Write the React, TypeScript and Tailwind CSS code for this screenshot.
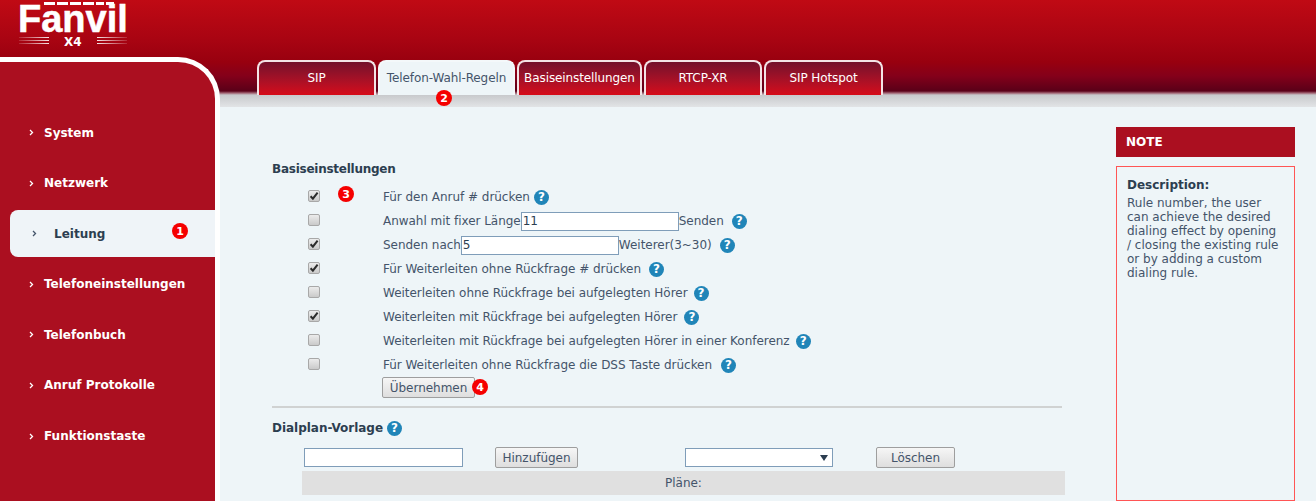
const menuItems = [
  "System",
  "Netzwerk",
  "Leitung",
  "Telefoneinstellungen",
  "Telefonbuch",
  "Anruf Protokolle",
  "Funktionstaste",
];

const tabs = [
  { label: "SIP", width: "w-[119px]" },
  { label: "Telefon-Wahl-Regeln", width: "w-[137px]", active: true },
  { label: "Basiseinstellungen", width: "w-[125px]" },
  { label: "RTCP-XR", width: "w-[118px]" },
  { label: "SIP Hotspot", width: "w-[119px]" },
];

function Badge({ n, className }: { n: number; className: string }) {
  return (
    <span
      className={`absolute flex h-4 w-4 items-center justify-center rounded-full bg-[#f50000] text-[11px] leading-none font-bold text-white ${className}`}
    >
      {n}
    </span>
  );
}

function Help({ className = "" }: { className?: string }) {
  return (
    <span
      className={`inline-flex h-[15px] w-[15px] shrink-0 items-center justify-center rounded-full bg-[#2085b8] text-[12px] leading-none font-bold text-white ${className}`}
    >
      ?
    </span>
  );
}

function Chevron({ className }: { className: string }) {
  return (
    <svg width="5" height="7" viewBox="0 0 5 7" className={className}>
      <path d="M1 1l2.5 2.5L1 6" fill="none" stroke="currentColor" strokeWidth="1.3" />
    </svg>
  );
}

function Check({ on }: { on?: boolean }) {
  return (
    <span className="-mt-[2px] flex h-3 w-3 items-center justify-center rounded-[2px] border border-[#a8a8a8] bg-gradient-to-b from-[#ececec] to-[#cacaca]">
      {on && (
        <svg width="10" height="10" viewBox="0 0 10 10">
          <path d="M1.6 5.2l2.3 2.5L8.6 1.6" fill="none" stroke="#2b2b2b" strokeWidth="2" />
        </svg>
      )}
    </span>
  );
}

function Button({ label, className }: { label: string; className: string }) {
  return (
    <button className={`h-[21px] rounded-[2px] border border-[#9e9e9e] bg-gradient-to-b from-[#f6f6f6] to-[#dedede] text-[12px] text-[#44546a] ${className}`}>
      {label}
    </button>
  );
}

function Row({ on, children }: { on?: boolean; children: React.ReactNode }) {
  return (
    <div className="flex h-6 items-center">
      <div className="ml-[36px] w-[75px]">
        <Check on={on} />
      </div>
      <div className="flex items-center whitespace-nowrap">{children}</div>
    </div>
  );
}

function Logo() {
  return (
    <div className="relative h-[57px] pt-[2px] pl-[18px]">
      <svg width="70" height="3" viewBox="0 0 70 3" className="absolute top-[2px] left-[44px]">
        <path d="M0 1.5h11M13 1.5h11M26 1.5h11M39 1.5h11M52 1.5h8M62 1.5h8" stroke="#fff" strokeWidth="3" />
      </svg>
      <div className="font-['Liberation_Sans'] text-[38px] leading-[34px] font-bold text-white [-webkit-text-stroke:0.5px_white]">Fanvil</div>
      <svg width="110" height="12" viewBox="0 0 110 12" className="block">
        <defs>
          <linearGradient id="fadeLeft">
            <stop offset="0" stopColor="#fff" stopOpacity="0.15" />
            <stop offset="1" stopColor="#fff" stopOpacity="0.9" />
          </linearGradient>
          <linearGradient id="fadeRight">
            <stop offset="0" stopColor="#fff" stopOpacity="0.9" />
            <stop offset="1" stopColor="#fff" stopOpacity="0.15" />
          </linearGradient>
        </defs>
        <rect x="1" y="1" width="30" height="1" fill="url(#fadeLeft)" />
        <rect x="1" y="4" width="30" height="1" fill="url(#fadeLeft)" />
        <rect x="1" y="7" width="30" height="1" fill="url(#fadeLeft)" />
        <rect x="79" y="1" width="30" height="1" fill="url(#fadeRight)" />
        <rect x="79" y="4" width="30" height="1" fill="url(#fadeRight)" />
        <rect x="79" y="7" width="30" height="1" fill="url(#fadeRight)" />
      </svg>
      <span className="absolute top-[33px] left-[64px] text-[12px] font-bold text-white">X4</span>
    </div>
  );
}

function Sidebar() {
  return (
    <div className="flex w-[220px] shrink-0 flex-col">
      <Logo />
      <nav className="flex flex-1 flex-col gap-[3.6px] rounded-tr-[42px] border-t-[5px] border-r-[5px] border-white bg-[#ab0f20] pt-[47px] text-[12px] font-bold text-white">
        {menuItems.map((item) =>
          item === "Leitung" ? (
            <div key={item} className="relative ml-[10px] flex h-[47px] items-center rounded-l-lg bg-[#eff4f8] text-[#2c3e50]">
              <Chevron className="ml-[22px] text-[#44546a]" />
              <span className="ml-[17px]">{item}</span>
              <Badge n={1} className="top-[13px] left-[162px]" />
            </div>
          ) : (
            <div key={item} className="flex h-[47px] items-center pl-[29px]">
              <Chevron className="text-white" />
              <span className="ml-[10px]">{item}</span>
            </div>
          ),
        )}
      </nav>
    </div>
  );
}

function Tabs() {
  return (
    <div className="relative flex h-[95px] items-end gap-[2px] pl-[37px]">
      {tabs.map((tab) => (
        <div
          key={tab.label}
          className={`flex h-[35px] items-center justify-center rounded-t-lg border-2 border-b-0 pb-[2px] text-[12px] tracking-[-0.1px] ${tab.width} ${
            tab.active
              ? "border-[#f4f8fa] bg-[#eef5f8] text-[#44546a]"
              : "border-[#f3e4e6] bg-gradient-to-b from-[#74102a] to-[#d60a18] text-white"
          }`}
        >
          {tab.label}
        </div>
      ))}
      <Badge n={2} className="top-[90px] left-[216px]" />
    </div>
  );
}

function Form() {
  return (
    <div className="relative w-[842px] pt-[54px] pl-[52px] text-[12px] tracking-[-0.03px] text-[#44546a]">
      <h3 className="text-[12px] leading-4 font-bold tracking-[-0.25px] text-[#2c3e50]">Basiseinstellungen</h3>
      <div className="mt-[8px]">
        <Row on>
          Für den Anruf # drücken
          <Help className="ml-[4px]" />
        </Row>
        <Row>
          Anwahl mit fixer Länge
          <input readOnly value="11" className="h-[19px] w-[158px] border border-[#7f9db9] bg-white px-[1px] text-[12px] text-[#2c3e50] outline-none" />
          Senden
          <Help className="ml-[8px]" />
        </Row>
        <Row on>
          Senden nach
          <input readOnly value="5" className="h-[19px] w-[158px] border border-[#7f9db9] bg-white px-[1px] text-[12px] text-[#2c3e50] outline-none" />
          Weiterer(3~30)
          <Help className="ml-[8px]" />
        </Row>
        <Row on>
          Für Weiterleiten ohne Rückfrage # drücken
          <Help className="ml-[8px]" />
        </Row>
        <Row>
          Weiterleiten ohne Rückfrage bei aufgelegten Hörer
          <Help className="ml-[6px]" />
        </Row>
        <Row on>
          Weiterleiten mit Rückfrage bei aufgelegten Hörer
          <Help className="ml-[7px]" />
        </Row>
        <Row>
          Weiterleiten mit Rückfrage bei aufgelegten Hörer in einer Konferenz
          <Help className="ml-[6px]" />
        </Row>
        <Row>
          Für Weiterleiten ohne Rückfrage die DSS Taste drücken
          <Help className="ml-[9px]" />
        </Row>
      </div>
      <div className="relative ml-[110px]">
        <Button label="Übernehmen" className="w-[93px]" />
        <Badge n={4} className="top-[2px] left-[90px]" />
      </div>
      <div className="mt-[8px] h-[2px] w-[790px] bg-[#d0d2d2]" />
      <div className="mt-[12px] flex h-4 items-center text-[12px] font-bold text-[#2c3e50]">
        Dialplan-Vorlage
        <Help className="ml-[4px]" />
      </div>
      <div className="mt-[11px] flex h-[21px] items-center">
        <input readOnly className="ml-[32px] h-[19px] w-[159px] border border-[#7f9db9] bg-white outline-none" />
        <Button label="Hinzufügen" className="ml-[32px] w-[83px]" />
        <div className="ml-[107px] flex h-[19px] w-[148px] items-center justify-end border border-[#7f9db9] bg-white pr-[4px]">
          <svg width="8" height="6" viewBox="0 0 8 6">
            <path d="M0 0h8L4 6z" fill="#2c3e50" />
          </svg>
        </div>
        <Button label="Löschen" className="ml-[43px] w-[79px]" />
      </div>
      <div className="mt-[3px] ml-[30px] flex h-6 w-[763px] items-center justify-center bg-[#e0e0e0]">Pläne:</div>
      <Badge n={3} className="top-[79px] left-[118px]" />
    </div>
  );
}

function Note() {
  return (
    <div className="ml-[54px] flex w-[179px] flex-col pt-[20px]">
      <div className="flex h-[30px] items-center bg-[#ab0f20] pl-[10px] text-[12px] font-bold text-white">NOTE</div>
      <div className="mt-[9px] flex-1 border border-[#f55] px-[10px] pt-[10px] text-[12px] leading-[14px] text-[#44546a]">
        <div className="mb-[3px] leading-[16px] font-bold text-[#2c3e50]">Description:</div>
        Rule number, the user can achieve the desired dialing effect by opening / closing the existing rule or by adding a custom dialing rule.
      </div>
    </div>
  );
}

export default function App() {
  return (
    <div className="flex h-[501px] w-[1316px] overflow-hidden bg-[#eef5f8] bg-[linear-gradient(to_bottom,#c00a14_0px,#a80412_40px,#98000f_62px,#84001a_76px,#5a0018_91px,#a06070_93px,#c8c9cc_95px,#e2e4e6_107px)] bg-[length:100%_107px] bg-no-repeat font-['DejaVu_Sans',sans-serif]">
      <Sidebar />
      <div className="flex min-w-0 flex-1 flex-col">
        <Tabs />
        <div className="flex flex-1 pt-[12px]">
          <Form />
          <Note />
        </div>
      </div>
    </div>
  );
}
